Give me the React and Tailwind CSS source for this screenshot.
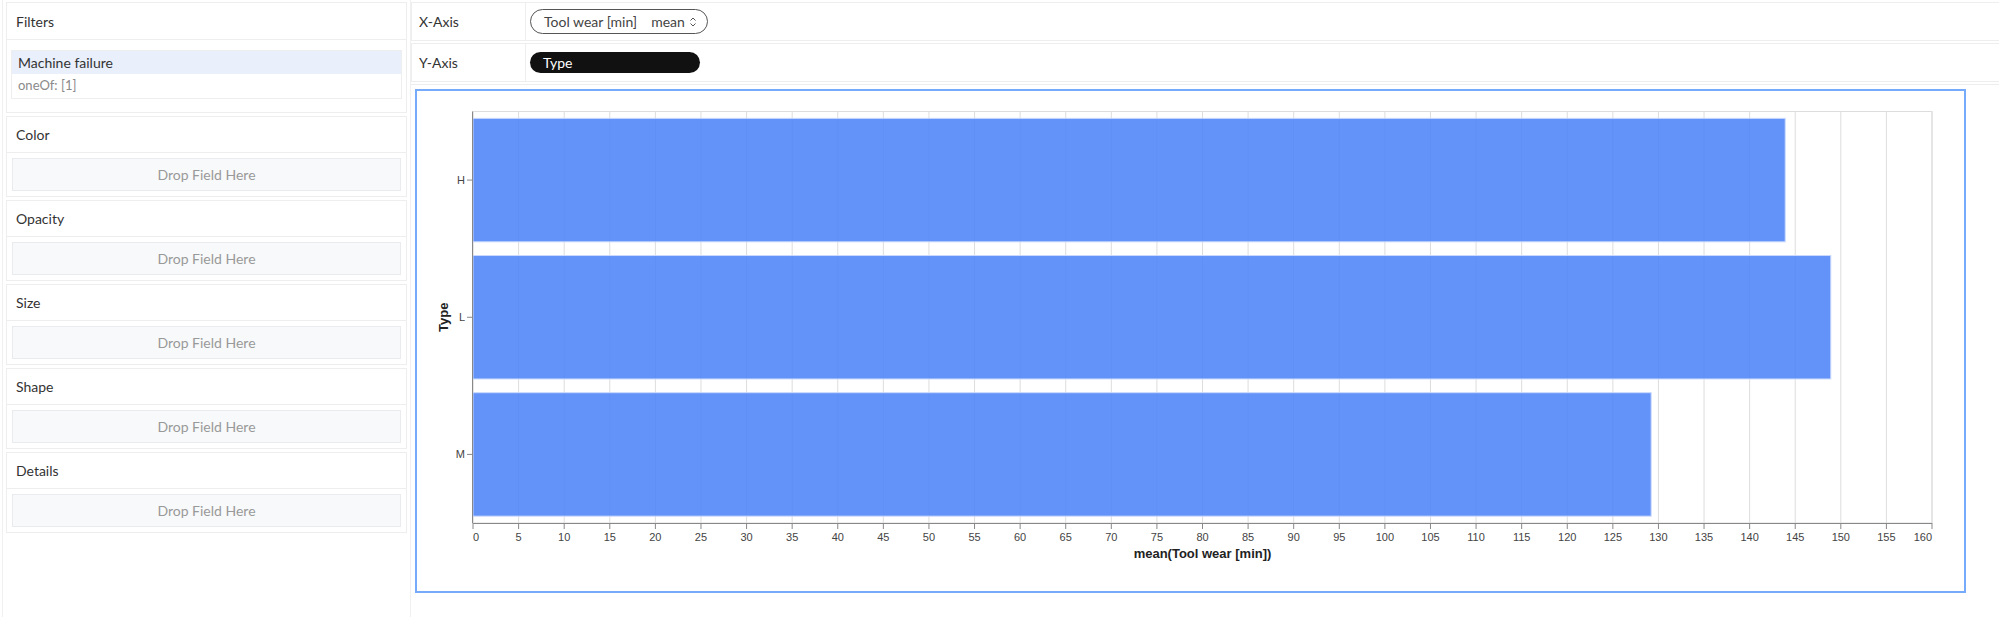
import React from "react";

const channels = ["Color", "Opacity", "Size", "Shape", "Details"];

const bars = [
  { label: "H", value: 143.9 },
  { label: "L", value: 148.9 },
  { label: "M", value: 129.2 },
];

const Chart = () => {
  const x0 = 56;
  const x1 = 1515;
  const y0 = 20.5;
  const y1 = 432;
  const scale = (x1 - x0) / 160;
  const step = (y1 - y0) / 3;
  const ticks = Array.from({ length: 33 }, (_, i) => i * 5);

  return (
    <svg width="1547" height="500" className="block">
      {/* view frame */}
      <rect x={x0} y={y0} width={x1 - x0} height={y1 - y0} fill="none" stroke="#dddddd" />
      {ticks.map((t) => (
        <line
          key={"g" + t}
          x1={x0 + t * scale}
          x2={x0 + t * scale}
          y1={y0}
          y2={y1}
          stroke="#dddddd"
        />
      ))}
      {bars.map((b, i) => (
        <rect
          key={b.label}
          x={x0}
          y={y0 + step * 0.05 + i * step}
          width={b.value * scale}
          height={step * 0.9}
          fill="#4c82f7"
          fillOpacity="0.87"
          stroke="#c9d9fc"
          strokeWidth="1"
        />
      ))}
      {/* x axis */}
      <line x1={x0} x2={x1} y1={y1 + 0.5} y2={y1 + 0.5} stroke="#888888" />
      {ticks.map((t, i) => (
        <g key={"t" + t}>
          <line x1={x0 + t * scale} x2={x0 + t * scale} y1={y1} y2={y1 + 6} stroke="#888888" />
          <text
            x={x0 + t * scale}
            y={y1 + 18}
            fontSize="11"
            fill="#444"
            fontFamily="'Liberation Sans', Arial, sans-serif"
            textAnchor={i === 0 ? "start" : i === ticks.length - 1 ? "end" : "middle"}
          >
            {t}
          </text>
        </g>
      ))}
      <text
        x={(x0 + x1) / 2}
        y={y1 + 35}
        fontSize="13"
        fontWeight="bold"
        fill="#222"
        textAnchor="middle"
        fontFamily="'Liberation Sans', Arial, sans-serif"
      >
        mean(Tool wear [min])
      </text>
      {/* y axis */}
      <line x1={x0 - 0.5} x2={x0 - 0.5} y1={y0} y2={y1} stroke="#888888" />
      {bars.map((b, i) => {
        const cy = y0 + step * (i + 0.5);
        return (
          <g key={"y" + b.label}>
            <line x1={x0 - 6} x2={x0} y1={cy} y2={cy} stroke="#888888" />
            <text
              x={x0 - 8}
              y={cy + 4}
              fontSize="11"
              fill="#444"
              textAnchor="end"
              fontFamily="'Liberation Sans', Arial, sans-serif"
            >
              {b.label}
            </text>
          </g>
        );
      })}
      <text
        transform={`translate(31 ${(y0 + y1) / 2}) rotate(-90)`}
        fontSize="13"
        fontWeight="bold"
        fill="#222"
        textAnchor="middle"
        fontFamily="'Liberation Sans', Arial, sans-serif"
      >
        Type
      </text>
    </svg>
  );
};

const ChannelBox = ({ name }) => (
  <div className="border border-[#eeeeee] bg-white">
    <div className="h-[36px] flex items-center px-[9px] border-b border-[#eeeeee] text-[14px] text-[#333]">
      {name}
    </div>
    <div className="p-[5px]">
      <div className="h-[33px] flex items-center justify-center bg-[#f8f9fa] border border-[#e9ebee] text-[14px] text-[#999]">
        Drop Field Here
      </div>
    </div>
  </div>
);

export default function App() {
  return (
    <div className="flex w-[1999px] h-[617px] bg-white overflow-hidden font-['Lato','Noto_Sans',sans-serif]">
      {/* left panel */}
      <div className="w-[409px] ml-[2px] shrink-0 border-l border-r border-[#f0f0f0] px-[3px] pt-[2px] flex flex-col gap-[3px]">
        <div className="border border-[#eeeeee]">
          <div className="h-[37px] flex items-center px-[9px] border-b border-[#eeeeee] text-[14px] text-[#333]">
            Filters
          </div>
          <div className="px-[4px] pt-[10px] pb-[13px]">
            <div className="border border-[#eeeeee]">
              <div className="h-[23px] flex items-center px-[6px] bg-[#e9effb] text-[14px] text-[#333]">
                Machine failure
              </div>
              <div className="h-[24px] flex items-center px-[6px] text-[13px] text-[#8a8a8a]">
                oneOf: [1]
              </div>
            </div>
          </div>
        </div>
        {channels.map((c) => (
          <ChannelBox key={c} name={c} />
        ))}
      </div>

      {/* right panel */}
      <div className="flex-1 flex flex-col pt-[2px]">
        <div className="h-[39px] flex border border-r-0 border-[#eeeeee]">
          <div className="w-[114px] flex items-center px-[7px] border-r border-[#eeeeee] text-[14px] text-[#333]">
            X-Axis
          </div>
          <div className="flex items-center px-[4px]">
            <div className="h-[25px] w-[178px] rounded-full border border-[#555] flex items-center pl-[13px] text-[14px] text-[#444]">
              <span>Tool wear [min]</span>
              <span className="ml-[14px]">mean</span>
              <svg width="8" height="12" viewBox="0 0 8 12" className="ml-[4px]">
                <path d="M1.5 4.5 L4 2 L6.5 4.5 M1.5 7.5 L4 10 L6.5 7.5" fill="none" stroke="#555" strokeWidth="1" />
              </svg>
            </div>
          </div>
        </div>
        <div className="h-[39px] mt-[2px] flex border border-r-0 border-[#eeeeee]">
          <div className="w-[114px] flex items-center px-[7px] border-r border-[#eeeeee] text-[14px] text-[#333]">
            Y-Axis
          </div>
          <div className="flex items-center px-[4px]">
            <div className="h-[21px] w-[170px] rounded-full bg-[#111] flex items-center pl-[13px] text-[14px] text-white">
              Type
            </div>
          </div>
        </div>
        <div className="border-t border-[#eeeeee] mt-[2px] pl-[4px] pt-[4px]">
          <div className="w-[1551px] h-[504px] border-2 border-[#76aafb]">
            <Chart />
          </div>
        </div>
      </div>
    </div>
  );
}
